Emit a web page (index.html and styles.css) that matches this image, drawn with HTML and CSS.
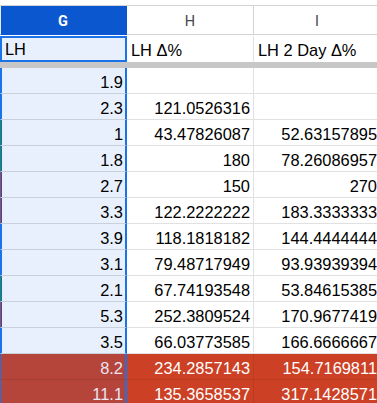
FILE: index.html
```html
<!DOCTYPE html>
<html>
<head>
<meta charset="utf-8">
<link rel="stylesheet" href="styles.css">
</head>
<body>
<div class="sheet">
  <div class="row hdr">
    <div class="cell g sel-h">G</div>
    <div class="cell">H</div>
    <div class="cell">I</div>
  </div>
  <div class="row r1">
    <div class="cell g active">LH</div>
    <div class="cell">LH Δ%</div>
    <div class="cell">LH 2 Day Δ%</div>
  </div>
  <div class="freeze"></div>
  <div class="row"><div class="cell g">1.9</div><div class="cell"></div><div class="cell"></div></div>
  <div class="row"><div class="cell g">2.3</div><div class="cell">121.0526316</div><div class="cell"></div></div>
  <div class="row"><div class="cell g up">1</div><div class="cell">43.47826087</div><div class="cell">52.63157895</div></div>
  <div class="row"><div class="cell g up">1.8</div><div class="cell">180</div><div class="cell">78.26086957</div></div>
  <div class="row"><div class="cell g down">2.7</div><div class="cell">150</div><div class="cell">270</div></div>
  <div class="row"><div class="cell g down">3.3</div><div class="cell">122.2222222</div><div class="cell">183.3333333</div></div>
  <div class="row"><div class="cell g">3.9</div><div class="cell">118.1818182</div><div class="cell">144.4444444</div></div>
  <div class="row"><div class="cell g">3.1</div><div class="cell">79.48717949</div><div class="cell">93.93939394</div></div>
  <div class="row"><div class="cell g up">2.1</div><div class="cell">67.74193548</div><div class="cell">53.84615385</div></div>
  <div class="row"><div class="cell g down">5.3</div><div class="cell">252.3809524</div><div class="cell">170.9677419</div></div>
  <div class="row"><div class="cell g">3.5</div><div class="cell">66.03773585</div><div class="cell">166.6666667</div></div>
  <div class="row hot"><div class="cell g">8.2</div><div class="cell">234.2857143</div><div class="cell">154.7169811</div></div>
  <div class="row hot"><div class="cell g">11.1</div><div class="cell">135.3658537</div><div class="cell">317.1428571</div></div>
</div>
</body>
</html>
```

FILE: styles.css
```css
html, body {
  margin: 0;
  padding: 0;
  background: #ffffff;
  overflow: hidden;
}

.sheet {
  width: 390px;
  padding-top: 5px;
  font-family: "Liberation Sans", Arial, sans-serif;
  font-size: 16.4px;
  color: #000;
}

.row {
  display: grid;
  grid-template-columns: 127px 127px 127px;
  height: 26px;
}

.cell {
  box-sizing: border-box;
  border-right: 1px solid #e1e1e1;
  border-bottom: 1px solid #e1e1e1;
  display: flex;
  align-items: flex-end;
  justify-content: flex-end;
  padding: 0 3px 1px 3px;
  line-height: 19px;
  white-space: nowrap;
  overflow: hidden;
}

.cell.g {
  background: #e8f0fe;
  border-left: 1px solid #1a73e8;
  border-right: 2px solid #1a73e8;
  border-bottom-color: #c8d0dc;
  box-shadow: inset 1px 0 0 #1a73e8;
  padding-right: 2px;
}

.cell.g.up { box-shadow: inset 1px 0 0 #1e7e34; }
.cell.g.down { box-shadow: inset 1px 0 0 #b3261e; }

/* column header row */
.hdr {
  height: 30px;
  border-top: 1px solid #d3d3d3;
}
.hdr .cell {
  height: 29px;
  justify-content: center;
  align-items: center;
  padding: 2px 0 0 0;
  font-family: Roboto, "Liberation Sans", sans-serif;
  font-size: 14.5px;
  color: #444746;
  border-bottom-color: #d3d3d3;
  border-right-color: #d3d3d3;
}
.hdr .cell.sel-h {
  background: #0b57d0;
  color: #ffffff;
  font-weight: 700;
  border-left: 1px solid #e8eaed;
  border-right: 2px solid #0b57d0;
  border-bottom: 1px solid #0b57d0;
  box-shadow: none;
}

/* first (frozen) row */
.r1 .cell {
  justify-content: flex-start;
  padding: 0 4px 2px 4px;
  border-bottom: none;
}
.r1 .cell.active {
  border: 2px solid #1a73e8;
  box-shadow: none;
  padding: 0 3px 0 3px;
  align-items: flex-end;
  padding-bottom: 1px;
}

.freeze {
  height: 6px;
  width: 390px;
  background: #c7c7c7;
}

/* highlighted rows */
.hot .cell {
  background: #cc4125;
  color: #ffffff;
  border-right-color: #bd3b21;
  border-bottom-color: #bd3b21;
}
.hot .cell.g {
  background: #b5453b;
  color: #ebe4f2;
  border-right-color: #1a73e8;
  border-bottom-color: #a63d34;
  box-shadow: none;
}
```
